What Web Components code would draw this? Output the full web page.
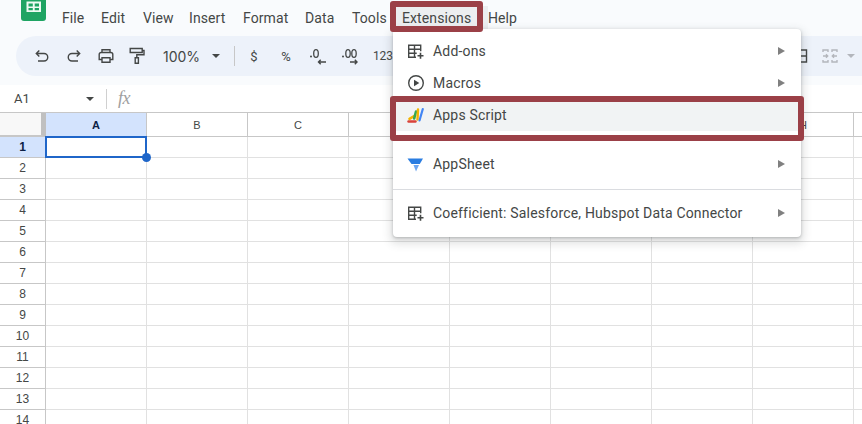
<!DOCTYPE html>
<html><head><meta charset="utf-8">
<style>
html,body{margin:0;padding:0;height:424px;overflow:hidden;background:#fff}
body{font-family:Roboto,"Liberation Sans",sans-serif;color:#444746}
</style></head><body>
<sheet-app>
  <sheet-menubar></sheet-menubar>
  <sheet-toolbar></sheet-toolbar>
  <sheet-formula></sheet-formula>
  <sheet-grid></sheet-grid>
  <ext-menu slot="over"></ext-menu>
  <red-box slot="over" style="left:390px;top:1px;width:93px;height:31px"></red-box>
  <red-box slot="over" style="left:390px;top:96px;width:414px;height:45px"></red-box>
</sheet-app>
<script>
const def=(n,html,setup)=>customElements.define(n,class extends HTMLElement{
  constructor(){super();const s=this.attachShadow({mode:'open'});s.innerHTML=html;if(setup)setup(s,this)}
});
def('sheet-app',`<style>:host{display:block;position:relative;width:862px;height:424px;overflow:hidden}
</style><slot></slot><slot name="over"></slot>`);

def('sheet-menubar',`<style>
:host{display:flex;height:36px;background:#f9fbfd;box-sizing:border-box;padding-left:21px;overflow:hidden}
svg{width:25px;height:31px;margin-top:-10px;flex:none}
nav{display:flex;align-items:center;height:36px;margin-left:16px;font-size:14px;letter-spacing:.1px;color:#444746;padding-bottom:1px;box-sizing:border-box}
span{white-space:nowrap}
.hov{background:#eceef0;padding:4px 0 4px 6px;margin-left:-6px;width:86px;box-sizing:content-box}
</style>
<svg viewBox="0 0 25 31"><rect width="25" height="31" rx="3" fill="#1fa463"/><path d="M5.500 11.500h14.500v10.500H5.500zM7.500 13.500v3h4.300v-3zM13.700 13.500v3H18v-3zM7.500 18v2.200h4.300V18zM13.700 18v2.200H18V18z" fill="#eefaf3" fill-rule="evenodd"/></svg>
<nav>
<span style="width:39px">File</span><span style="width:42px">Edit</span><span style="width:46px">View</span><span style="width:54px">Insert</span><span style="width:62px">Format</span><span style="width:47px">Data</span><span style="width:50px">Tools</span><span class="hov">Extensions</span><span>Help</span>
</nav>`);

def('sheet-toolbar',`<style>
:host{display:block;height:49px;background:#f9fbfd;box-sizing:border-box}
.pill{height:40px;margin-left:16px;background:#edf2fa;border-radius:20px 0 0 20px;display:flex;align-items:center;position:relative;color:#444746}
.i{display:flex;align-items:center;justify-content:center;flex:none}
svg{display:block;fill:none;stroke:#444746;stroke-width:1.400}
.zoom{width:48px;font-family:Inter,Roboto,sans-serif;font-size:14px;flex:none}
.sym{font-size:13px;font-family:Roboto,sans-serif}
.tri{width:0;height:0;border:4px solid transparent;border-top:4px solid #444746;border-bottom:0;flex:none}
.sep{width:1px;height:20px;background:#c7c7c7;flex:none}
</style>
<div class="pill">
 <div class="i" style="width:18px;margin-left:17px"><svg width="16" height="16" viewBox="0 0 16 16"><path d="M2.500 5.500h7.500a3.700 3.700 0 0 1 0 7.500H4M5.300 2.500 2.300 5.500l3 3"/></svg></div>
 <div class="i" style="width:18px;margin-left:14px"><svg width="16" height="16" viewBox="0 0 16 16"><path d="M13.500 5.500H6a3.700 3.700 0 0 0 0 7.500h6M10.700 2.500l3 3-3 3"/></svg></div>
 <div class="i" style="width:18px;margin-left:14px"><svg width="18" height="18" viewBox="0 0 18 18"><path d="M5 5.500V2.700h8v2.800M5 12.500H2.200V7.500a2 2 0 0 1 2-2h9.600a2 2 0 0 1 2 2v5H13M5 10.700h8v4.600H5z"/></svg></div>
 <div class="i" style="width:18px;margin-left:13px"><svg width="16" height="18" viewBox="0 0 16 18"><path d="M1.200 1.500h12v4h-12zM13.200 3.500h1.800v4.200H7.800v3M6.200 10.800h3.200v5.500H6.200z"/></svg></div>
 <div class="zoom" style="margin-left:17px">100%</div>
 <div class="tri" style="margin-left:1px"></div>
 <div class="sep" style="margin-left:14px"></div>
 <div class="i sym" style="width:20px;margin-left:9px">$</div>
 <div class="i sym" style="width:20px;margin-left:12px">%</div>
 <div class="i" style="width:22px;margin-left:11px"><svg width="22" height="20" viewBox="0 0 22 20"><circle cx="4" cy="10.500" r="1" fill="#444746" stroke="none"/><ellipse cx="9" cy="7.500" rx="2.300" ry="3.900" stroke-width="1.300"/><path d="M19 16h-7.500M13.700 13.800 11.500 16l2.200 2.200" stroke-width="1.400"/></svg></div>
 <div class="i" style="width:24px;margin-left:10px"><svg width="24" height="20" viewBox="0 0 24 20"><circle cx="4" cy="10.500" r="1" fill="#444746" stroke="none"/><ellipse cx="9" cy="7.500" rx="2.200" ry="3.900" stroke-width="1.300"/><ellipse cx="15" cy="7.500" rx="2.200" ry="3.900" stroke-width="1.300"/><path d="M11 16h7M15.800 13.800 18 16l-2.200 2.200" stroke-width="1.400"/></svg></div>
 <div class="i sym" style="width:24px;margin-left:8px;font-size:12px">123</div>
 <div class="i" style="position:absolute;left:773px;width:22px"><svg width="18" height="18" viewBox="0 0 18 18"><path d="M2.500 3h13v12h-13zM9 3v12M2.500 9h13"/></svg></div>
 <div class="i" style="position:absolute;left:804px;width:20px"><svg width="18" height="18" viewBox="0 0 18 18" style="stroke:#b3b6bc"><path d="M2 5V3h5v2M11 5V3h5v2M2 13v2h5v-2M11 13v2h5v-2M2 9h4.500M5 7.300 6.700 9 5 10.700M16 9h-4.500M13 7.300 11.300 9l1.700 1.700"/></svg></div>
 <div class="tri" style="position:absolute;left:831px;border-top-color:#b3b6bc"></div>
</div>`);

def('sheet-formula',`<style>
:host{display:flex;align-items:center;height:27px;background:#fff;border-bottom:1px solid #c7c7c7;color:#444746}
.a{font-size:13px;margin-left:14px;width:72px;font-family:Roboto,sans-serif}
.tri{width:0;height:0;border:4px solid transparent;border-top:4px solid #444746;border-bottom:0}
.sep{width:1px;height:20px;background:#d0d0d0;margin-left:12px}
.fx{font:italic 18px "Liberation Serif",serif;color:#a0a0a0;margin-left:11px;letter-spacing:-.5px}
</style><div class="a">A1</div><div class="tri"></div><div class="sep"></div><div class="fx">fx</div>`);

def('sheet-grid',`<style>
:host{display:block;overflow:hidden;height:312px;background:#fff}
.g{display:grid;grid-template-columns:46px repeat(8,101px) 9px;grid-template-rows:24px repeat(14,21px);font:11px "Liberation Sans",Arial,sans-serif;color:#444746}
.c{box-sizing:border-box;border-right:1px solid #e1e1e1;border-bottom:1px solid #e1e1e1}
.h{display:flex;align-items:center;justify-content:center;border-color:#c7c7c7;background:#fff}
.h.row{font-size:12px;line-height:12px}
.sel{background:#d3e3fd;color:#0b1f45;font-weight:700}
.corner{background:#f8f8f8;border-right:5px solid #c0c0c0;border-bottom:2px solid #c7c7c7}
.cur{position:relative;border:2px solid #1f66c9;margin:-1px 0 0 -1px;width:calc(100% + 1px);height:calc(100% + 1px)}
.cur::after{content:"";position:absolute;right:-6px;bottom:-6px;width:9px;height:9px;border-radius:50%;background:#1f66c9}
</style><div class="g"></div>`,(s)=>{
  const g=s.querySelector('.g');let h='<div class="c corner"></div>';
  ['A','B','C','','','','','H',''].forEach((l,i)=>h+=`<div class="c h${i?'':' sel'}">${l}</div>`);
  for(let r=1;r<=14;r++){h+=`<div class="c h row${r==1?' sel':''}">${r}</div>`;
    for(let c=0;c<9;c++)h+=`<div class="c${r==1&&c==0?' cur':''}"></div>`}
  g.innerHTML=h;
});

customElements.define('menu-item',class extends HTMLElement{
  constructor(){super();this.attachShadow({mode:'open'}).innerHTML=`<style>
  :host{display:flex;align-items:center;height:32px;padding-left:14px;font-size:14px;letter-spacing:.18px;color:#444746}
  :host([active]){background:#f1f3f4}
  ::slotted(svg){width:18px;height:18px;flex:none;margin-right:8px}
  .t{flex:1;white-space:nowrap}
  .a{width:0;height:0;border:4px solid transparent;border-left:7px solid #808080;border-right:0;margin-right:16px;display:none}
  :host([sub]) .a{display:block}
  </style><slot name="icon"></slot><div class="t"><slot></slot></div><div class="a"></div>`;
  }
});
const tbl=`<svg slot="icon" viewBox="0 0 18 18" fill="none" stroke="#444746" stroke-width="1.400"><path d="M9 15.300H1.700V3.200h12v6M1.700 7.200h12M1.700 11.300h8M7.500 3.200v12"/><path d="M13.500 10.800v6M10.500 13.800h6" stroke-width="1.600"/></svg>`;
def('ext-menu',`<style>
:host{position:absolute;left:393px;top:29px;width:408px;height:208px;background:#fff;border-radius:4px;box-shadow:0 1px 3px rgba(60,64,67,.3),0 4px 8px 3px rgba(60,64,67,.15);padding-top:6px;box-sizing:border-box;display:block}
hr{border:0;border-top:1px solid #dadce0;margin:0}
</style>
<menu-item sub>${tbl}Add-ons</menu-item>
<menu-item sub><svg slot="icon" viewBox="0 0 18 18" fill="none" stroke="#444746" stroke-width="1.400"><circle cx="9" cy="9" r="7.300"/><path d="M7 5.700 12.300 9 7 12.300z" fill="#444746" stroke="none"/></svg>Macros</menu-item>
<menu-item active><svg slot="icon" viewBox="0 0 18 18" fill="none" stroke-linecap="round"><path d="M1.500 15.500h7" stroke="#d9423a" stroke-width="2.400"/><path d="M2.500 12.800 8 9.500" stroke="#f4b400" stroke-width="2.600"/><path d="M7.200 12.500 9 5.500" stroke="#34a853" stroke-width="2.600"/><path d="M10.500 13.500 11 3.500" stroke="#f4b400" stroke-width="2.400"/><path d="M12.500 14.500 15.800 3" stroke="#4285f4" stroke-width="2.200"/></svg>Apps Script</menu-item>
<div style="height:17px"></div>
<menu-item sub><svg slot="icon" viewBox="0 0 18 18"><path d="M.5 3.500H16L12.800 9H4.500z" fill="#2a7de1"/><path d="M6.500 10H12L9 16.500z" fill="#6ea6f0"/></svg>AppSheet</menu-item>
<div style="height:9px"></div><hr><div style="height:7px"></div>
<menu-item sub>${tbl}Coefficient: Salesforce, Hubspot Data Connector</menu-item>`);

def('red-box',`<style>:host{position:absolute;display:block;box-sizing:border-box;border:6px solid #9b4047;border-radius:3px}</style>`);
</script>
</body></html>
